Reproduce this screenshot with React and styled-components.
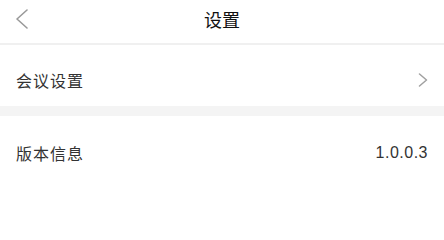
import React from 'react';
import styled, { createGlobalStyle } from 'styled-components';

const GlobalStyle = createGlobalStyle`
  html, body {
    margin: 0;
    padding: 0;
    background: #ffffff;
  }
  body {
    font-family: "Noto Sans CJK SC", "Liberation Sans", sans-serif;
  }
`;

const Page = styled.div`
  width: 444px;
  min-height: 210px;
  background: #ffffff;
`;

const Header = styled.header`
  display: grid;
  grid-template-columns: 44px 1fr 44px;
  align-items: center;
  height: 43px;
  border-bottom: 2px solid #f0f0f0;
`;

const BackButton = styled.button`
  display: flex;
  align-items: center;
  justify-content: center;
  width: 44px;
  height: 43px;
  padding: 0 0 5px 0;
  border: none;
  background: none;
  color: #9a9a9a;
  cursor: pointer;
`;

const Title = styled.h1`
  margin: 0;
  padding-bottom: 5px;
  text-align: center;
  font-size: 18px;
  font-weight: 400;
  color: #111111;
`;

const Row = styled.div`
  display: flex;
  align-items: center;
  justify-content: space-between;
  padding: ${p => p.$top}px 16px ${p => p.$bottom}px 16px;
  line-height: 22px;
  font-size: 16px;
  color: #333333;
`;

const Label = styled.span`
  letter-spacing: 1px;
`;

const Value = styled.span`
  font-family: "Liberation Sans", "Noto Sans", sans-serif;
  font-size: 16px;
  letter-spacing: 0.5px;
  color: #333333;
`;

const Arrow = styled.span`
  display: flex;
  color: #a0a0a0;
`;

const Gap = styled.div`
  height: 10px;
  background: #f4f4f4;
`;

const ChevronLeft = () => (
  <svg width="14" height="20" viewBox="0 0 14 20" fill="none">
    <path d="M12 1 L2 10 L12 19" stroke="currentColor" strokeWidth="1.6" strokeLinecap="round" strokeLinejoin="round" />
  </svg>
);

const ChevronRight = () => (
  <svg width="10" height="14" viewBox="0 0 10 14" fill="none">
    <path d="M1.5 1 L8.5 7 L1.5 13" stroke="currentColor" strokeWidth="1.5" strokeLinecap="round" strokeLinejoin="round" />
  </svg>
);

function App() {
  return (
    <>
      <GlobalStyle />
      <Page>
        <Header>
          <BackButton aria-label="返回">
            <ChevronLeft />
          </BackButton>
          <Title>设置</Title>
          <span />
        </Header>

        <Row $top={24} $bottom={15}>
          <Label>会议设置</Label>
          <Arrow>
            <ChevronRight />
          </Arrow>
        </Row>

        <Gap />

        <Row $top={26} $bottom={26}>
          <Label>版本信息</Label>
          <Value>1.0.0.3</Value>
        </Row>
      </Page>
    </>
  );
}

export default App;
